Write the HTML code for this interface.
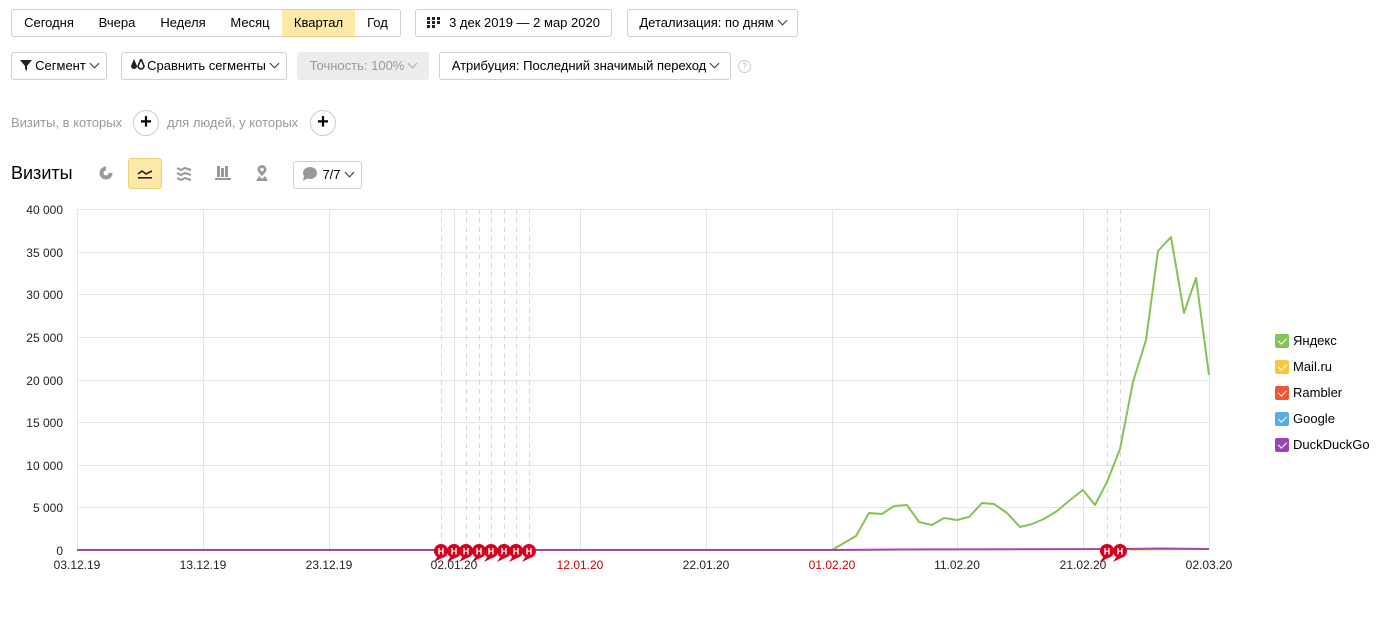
<!DOCTYPE html>
<html><head><meta charset="utf-8">
<style>
*{box-sizing:border-box;margin:0;padding:0}
body{width:1380px;height:625px;background:#fff;font-family:"Liberation Sans",Arial,sans-serif;font-size:13px;color:#000;position:relative;overflow:hidden}
.b{position:absolute;height:28px;border:1px solid #d0d0d0;border-radius:3px;background:#fff;line-height:26px;text-align:center;white-space:nowrap}
.seg{position:absolute;top:9px;height:28px;border:1px solid #d0d0d0;line-height:26px;text-align:center;background:#fff}
.gray{color:#999}
.plus{position:absolute;width:26px;height:26px;border:1px solid #ccc;border-radius:50%;text-align:center;line-height:23px;font-size:20px;font-weight:bold}
.chev{display:inline-block;width:7px;height:7px;border-right:1.2px solid #333;border-bottom:1.2px solid #333;transform:rotate(45deg);margin-left:5px;position:relative;top:-3px}
.lg{position:absolute;left:1275px;font-size:13px}
.lg i{position:absolute;left:0;top:1px;width:14px;height:14px;border-radius:2px}
.lg i:after{content:"";position:absolute;left:4.5px;top:2px;width:3.5px;height:7px;border-right:1.8px solid #fff;border-bottom:1.8px solid #fff;transform:rotate(45deg)}
.lg span{position:absolute;left:18px;top:0;white-space:nowrap}
</style></head><body>

<div class="seg" style="left:11px;width:76px;border-radius:3px 0 0 3px">Сегодня</div>
<div class="seg" style="left:86px;width:63px;border-left:none">Вчера</div>
<div class="seg" style="left:148px;width:71px;border-left:none">Неделя</div>
<div class="seg" style="left:218px;width:65px;border-left:none">Месяц</div>
<div class="seg" style="left:282px;width:74px;border-left:none;background:#fde9a8;border-color:#e8cf7a">Квартал</div>
<div class="seg" style="left:355px;width:46px;border-left:none;border-radius:0 3px 3px 0">Год</div>

<div class="b" style="left:415px;top:9px;width:197px"><svg width="13" height="11" style="vertical-align:-1px;margin-right:9px"><g fill="#222"><rect x="0" y="0" width="3" height="3"/><rect x="5" y="0" width="3" height="3"/><rect x="10" y="0" width="3" height="3"/><rect x="0" y="4" width="3" height="3"/><rect x="5" y="4" width="3" height="3"/><rect x="10" y="4" width="3" height="3"/><rect x="0" y="8" width="3" height="3"/><rect x="5" y="8" width="3" height="3"/></g></svg>3 дек 2019 — 2 мар 2020</div>
<div class="b" style="left:627px;top:9px;width:171px">Детализация: по дням<span class="chev"></span></div>

<div class="b" style="left:11px;top:52px;width:96px"><svg width="12" height="11" style="vertical-align:-1px;margin-right:3px"><path d="M0 0H12L7 6V11L5 9V6Z" fill="#222"/></svg>Сегмент<span class="chev"></span></div>
<div class="b" style="left:121px;top:52px;width:166px"><svg width="15" height="12" style="vertical-align:-1px;margin-right:2px"><path d="M4 0L7 7A3 3 0 1 1 1 7Z" fill="#222"/><path d="M11 0L14 7A3 3 0 1 1 8 7Z" fill="none" stroke="#222" stroke-width="1.6"/></svg>Сравнить сегменты<span class="chev"></span></div>
<div class="b gray" style="left:297px;top:52px;width:132px;background:#ececec;border-color:#ececec">Точность: 100%<span class="chev" style="border-color:#aaa"></span></div>
<div class="b" style="left:439px;top:52px;width:292px">Атрибуция: Последний значимый переход<span class="chev"></span></div>
<div style="position:absolute;left:738px;top:60px;width:13px;height:13px;border:1px solid #ccc;border-radius:50%;font-size:9px;color:#bbb;text-align:center;line-height:11px">?</div>

<div class="gray" style="position:absolute;left:11px;top:115px">Визиты, в которых</div>
<div class="plus" style="left:133px;top:110px">+</div>
<div class="gray" style="position:absolute;left:167px;top:115px">для людей, у которых</div>
<div class="plus" style="left:310px;top:110px">+</div>

<div style="position:absolute;left:11px;top:163px;font-size:18px">Визиты</div>
<svg style="position:absolute;left:98px;top:165px" width="16" height="16"><circle cx="8" cy="8" r="6.5" fill="#999"/><path d="M8 8L8 1.5A6.5 6.5 0 0 1 14.5 8Z" fill="#fff"/><circle cx="8" cy="8" r="2.5" fill="#fff"/></svg>
<div style="position:absolute;left:128px;top:158px;width:34px;height:31px;background:#fde9a8;border:1px solid #e8cf7a;border-radius:3px"></div>
<svg style="position:absolute;left:137px;top:167px" width="16" height="14"><path d="M1 7L5 4L9 7L15 4" fill="none" stroke="#222" stroke-width="1.6"/><rect x="1" y="10" width="14" height="1.6" fill="#222"/></svg>
<svg style="position:absolute;left:176px;top:166px" width="16" height="15"><g fill="none" stroke="#999" stroke-width="2"><path d="M1 2L5 4L9 2L15 4"/><path d="M1 7L5 9L9 7L15 9"/><path d="M1 12L5 14L9 12L15 14"/></g></svg>
<svg style="position:absolute;left:215px;top:165px" width="16" height="16"><g fill="#999"><rect x="2" y="1" width="3" height="11"/><rect x="6" y="3" width="3" height="9"/><rect x="10" y="1" width="3" height="11"/><rect x="0" y="13" width="16" height="2"/></g></svg>
<svg style="position:absolute;left:254px;top:164px" width="16" height="18"><path d="M8 1A4.5 4.5 0 0 1 12.5 5.5C12.5 8 8 12 8 12C8 12 3.5 8 3.5 5.5A4.5 4.5 0 0 1 8 1Z" fill="#999"/><circle cx="8" cy="5.5" r="1.8" fill="#fff"/><path d="M2 17L5 12L8 15L11 12L14 17Z" fill="#999"/></svg>
<div class="b" style="left:293px;top:161px;width:69px;height:28px"><svg width="15" height="14" style="vertical-align:-2px;margin-right:5px"><ellipse cx="8" cy="6" rx="7" ry="6" fill="#999"/><path d="M2 9L1 14L6 11Z" fill="#999"/></svg>7/7<span class="chev"></span></div>

<svg style="position:absolute;left:0;top:0" width="1380" height="625">
<g stroke="#e4e4e4" stroke-width="1">
<line x1="77" y1="209.5" x2="1209" y2="209.5"/><line x1="77" y1="252.5" x2="1209" y2="252.5"/><line x1="77" y1="294.5" x2="1209" y2="294.5"/><line x1="77" y1="337.5" x2="1209" y2="337.5"/><line x1="77" y1="380.5" x2="1209" y2="380.5"/><line x1="77" y1="422.5" x2="1209" y2="422.5"/><line x1="77" y1="465.5" x2="1209" y2="465.5"/><line x1="77" y1="507.5" x2="1209" y2="507.5"/>
<line x1="77.5" y1="209" x2="77.5" y2="550"/><line x1="203.5" y1="209" x2="203.5" y2="550"/><line x1="329.5" y1="209" x2="329.5" y2="550"/><line x1="454.5" y1="209" x2="454.5" y2="550"/><line x1="580.5" y1="209" x2="580.5" y2="550"/><line x1="706.5" y1="209" x2="706.5" y2="550"/><line x1="832.5" y1="209" x2="832.5" y2="550"/><line x1="957.5" y1="209" x2="957.5" y2="550"/><line x1="1083.5" y1="209" x2="1083.5" y2="550"/><line x1="1209.5" y1="209" x2="1209.5" y2="550"/>
</g>
<g stroke="#d8d8d8" stroke-dasharray="5,4">
<line x1="441.5" y1="209" x2="441.5" y2="545"/><line x1="466.5" y1="209" x2="466.5" y2="545"/><line x1="479.5" y1="209" x2="479.5" y2="545"/><line x1="491.5" y1="209" x2="491.5" y2="545"/><line x1="504.5" y1="209" x2="504.5" y2="545"/><line x1="516.5" y1="209" x2="516.5" y2="545"/><line x1="529.5" y1="209" x2="529.5" y2="545"/><line x1="1107.5" y1="209" x2="1107.5" y2="545"/><line x1="1120.5" y1="209" x2="1120.5" y2="545"/>
</g>
<g font-family="Liberation Sans,Arial,sans-serif" font-size="12" text-anchor="end" fill="#222">
<text x="63" y="214">40 000</text><text x="63" y="257">35 000</text><text x="63" y="299">30 000</text><text x="63" y="342">25 000</text><text x="63" y="385">20 000</text><text x="63" y="427">15 000</text><text x="63" y="470">10 000</text><text x="63" y="512">5 000</text><text x="63" y="555">0</text>
</g>
<g font-family="Liberation Sans,Arial,sans-serif" font-size="12" text-anchor="middle" fill="#222">
<text x="77" y="569">03.12.19</text><text x="203" y="569">13.12.19</text><text x="329" y="569">23.12.19</text><text x="454" y="569">02.01.20</text><text x="580" y="569" fill="#c00">12.01.20</text><text x="706" y="569">22.01.20</text><text x="832" y="569" fill="#c00">01.02.20</text><text x="957" y="569">11.02.20</text><text x="1083" y="569">21.02.20</text><text x="1209" y="569">02.03.20</text>
</g>
<polyline fill="none" stroke="#86c256" stroke-width="2" stroke-linejoin="round" points="832,550 856,536 869,513 882,514 894,506 907,505 919,522 932,525 944,518 957,520 969,517 982,503 994,504 1007,513 1020,527 1032,524 1044,519 1057,511 1070,500 1083,490 1095,505 1107,482 1120,449 1133,382 1146,340 1158,251 1171,237 1184,313 1196,278 1209,375"/>
<polyline fill="none" stroke="#e9b83a" stroke-width="2" points="1130,549.5 1209,549"/>
<polyline fill="none" stroke="#a04aa6" stroke-width="2" points="77,550 832,550 900,549.5 1130,549 1160,548.5 1209,549"/>
<g font-family="Liberation Sans,Arial,sans-serif" font-size="9" font-weight="bold" fill="#fff" text-anchor="middle">
<g transform="translate(441,551)"><path d="M-3 5L-7 11L3 6Z" fill="#c8001e"/><circle r="7" fill="#d40020"/><text y="3.5">Н</text></g>
<g transform="translate(454,551)"><path d="M-3 5L-7 11L3 6Z" fill="#c8001e"/><circle r="7" fill="#d40020"/><text y="3.5">Н</text></g>
<g transform="translate(466,551)"><path d="M-3 5L-7 11L3 6Z" fill="#c8001e"/><circle r="7" fill="#d40020"/><text y="3.5">Н</text></g>
<g transform="translate(479,551)"><path d="M-3 5L-7 11L3 6Z" fill="#c8001e"/><circle r="7" fill="#d40020"/><text y="3.5">Н</text></g>
<g transform="translate(491,551)"><path d="M-3 5L-7 11L3 6Z" fill="#c8001e"/><circle r="7" fill="#d40020"/><text y="3.5">Н</text></g>
<g transform="translate(504,551)"><path d="M-3 5L-7 11L3 6Z" fill="#c8001e"/><circle r="7" fill="#d40020"/><text y="3.5">Н</text></g>
<g transform="translate(516,551)"><path d="M-3 5L-7 11L3 6Z" fill="#c8001e"/><circle r="7" fill="#d40020"/><text y="3.5">Н</text></g>
<g transform="translate(529,551)"><path d="M-3 5L-7 11L3 6Z" fill="#c8001e"/><circle r="7" fill="#d40020"/><text y="3.5">Н</text></g>
<g transform="translate(1107,551)"><path d="M-3 5L-7 11L3 6Z" fill="#c8001e"/><circle r="7" fill="#d40020"/><text y="3.5">Н</text></g>
<g transform="translate(1120,551)"><path d="M-3 5L-7 11L3 6Z" fill="#c8001e"/><circle r="7" fill="#d40020"/><text y="3.5">Н</text></g>
</g>
</svg>

<div class="lg" style="top:333px"><i style="background:#86c256"></i><span>Яндекс</span></div>
<div class="lg" style="top:359px"><i style="background:#f5c843"></i><span>Mail.ru</span></div>
<div class="lg" style="top:385px"><i style="background:#f05535"></i><span>Rambler</span></div>
<div class="lg" style="top:411px"><i style="background:#5aabe0"></i><span>Google</span></div>
<div class="lg" style="top:437px"><i style="background:#9b45b0"></i><span>DuckDuckGo</span></div>
</body></html>
